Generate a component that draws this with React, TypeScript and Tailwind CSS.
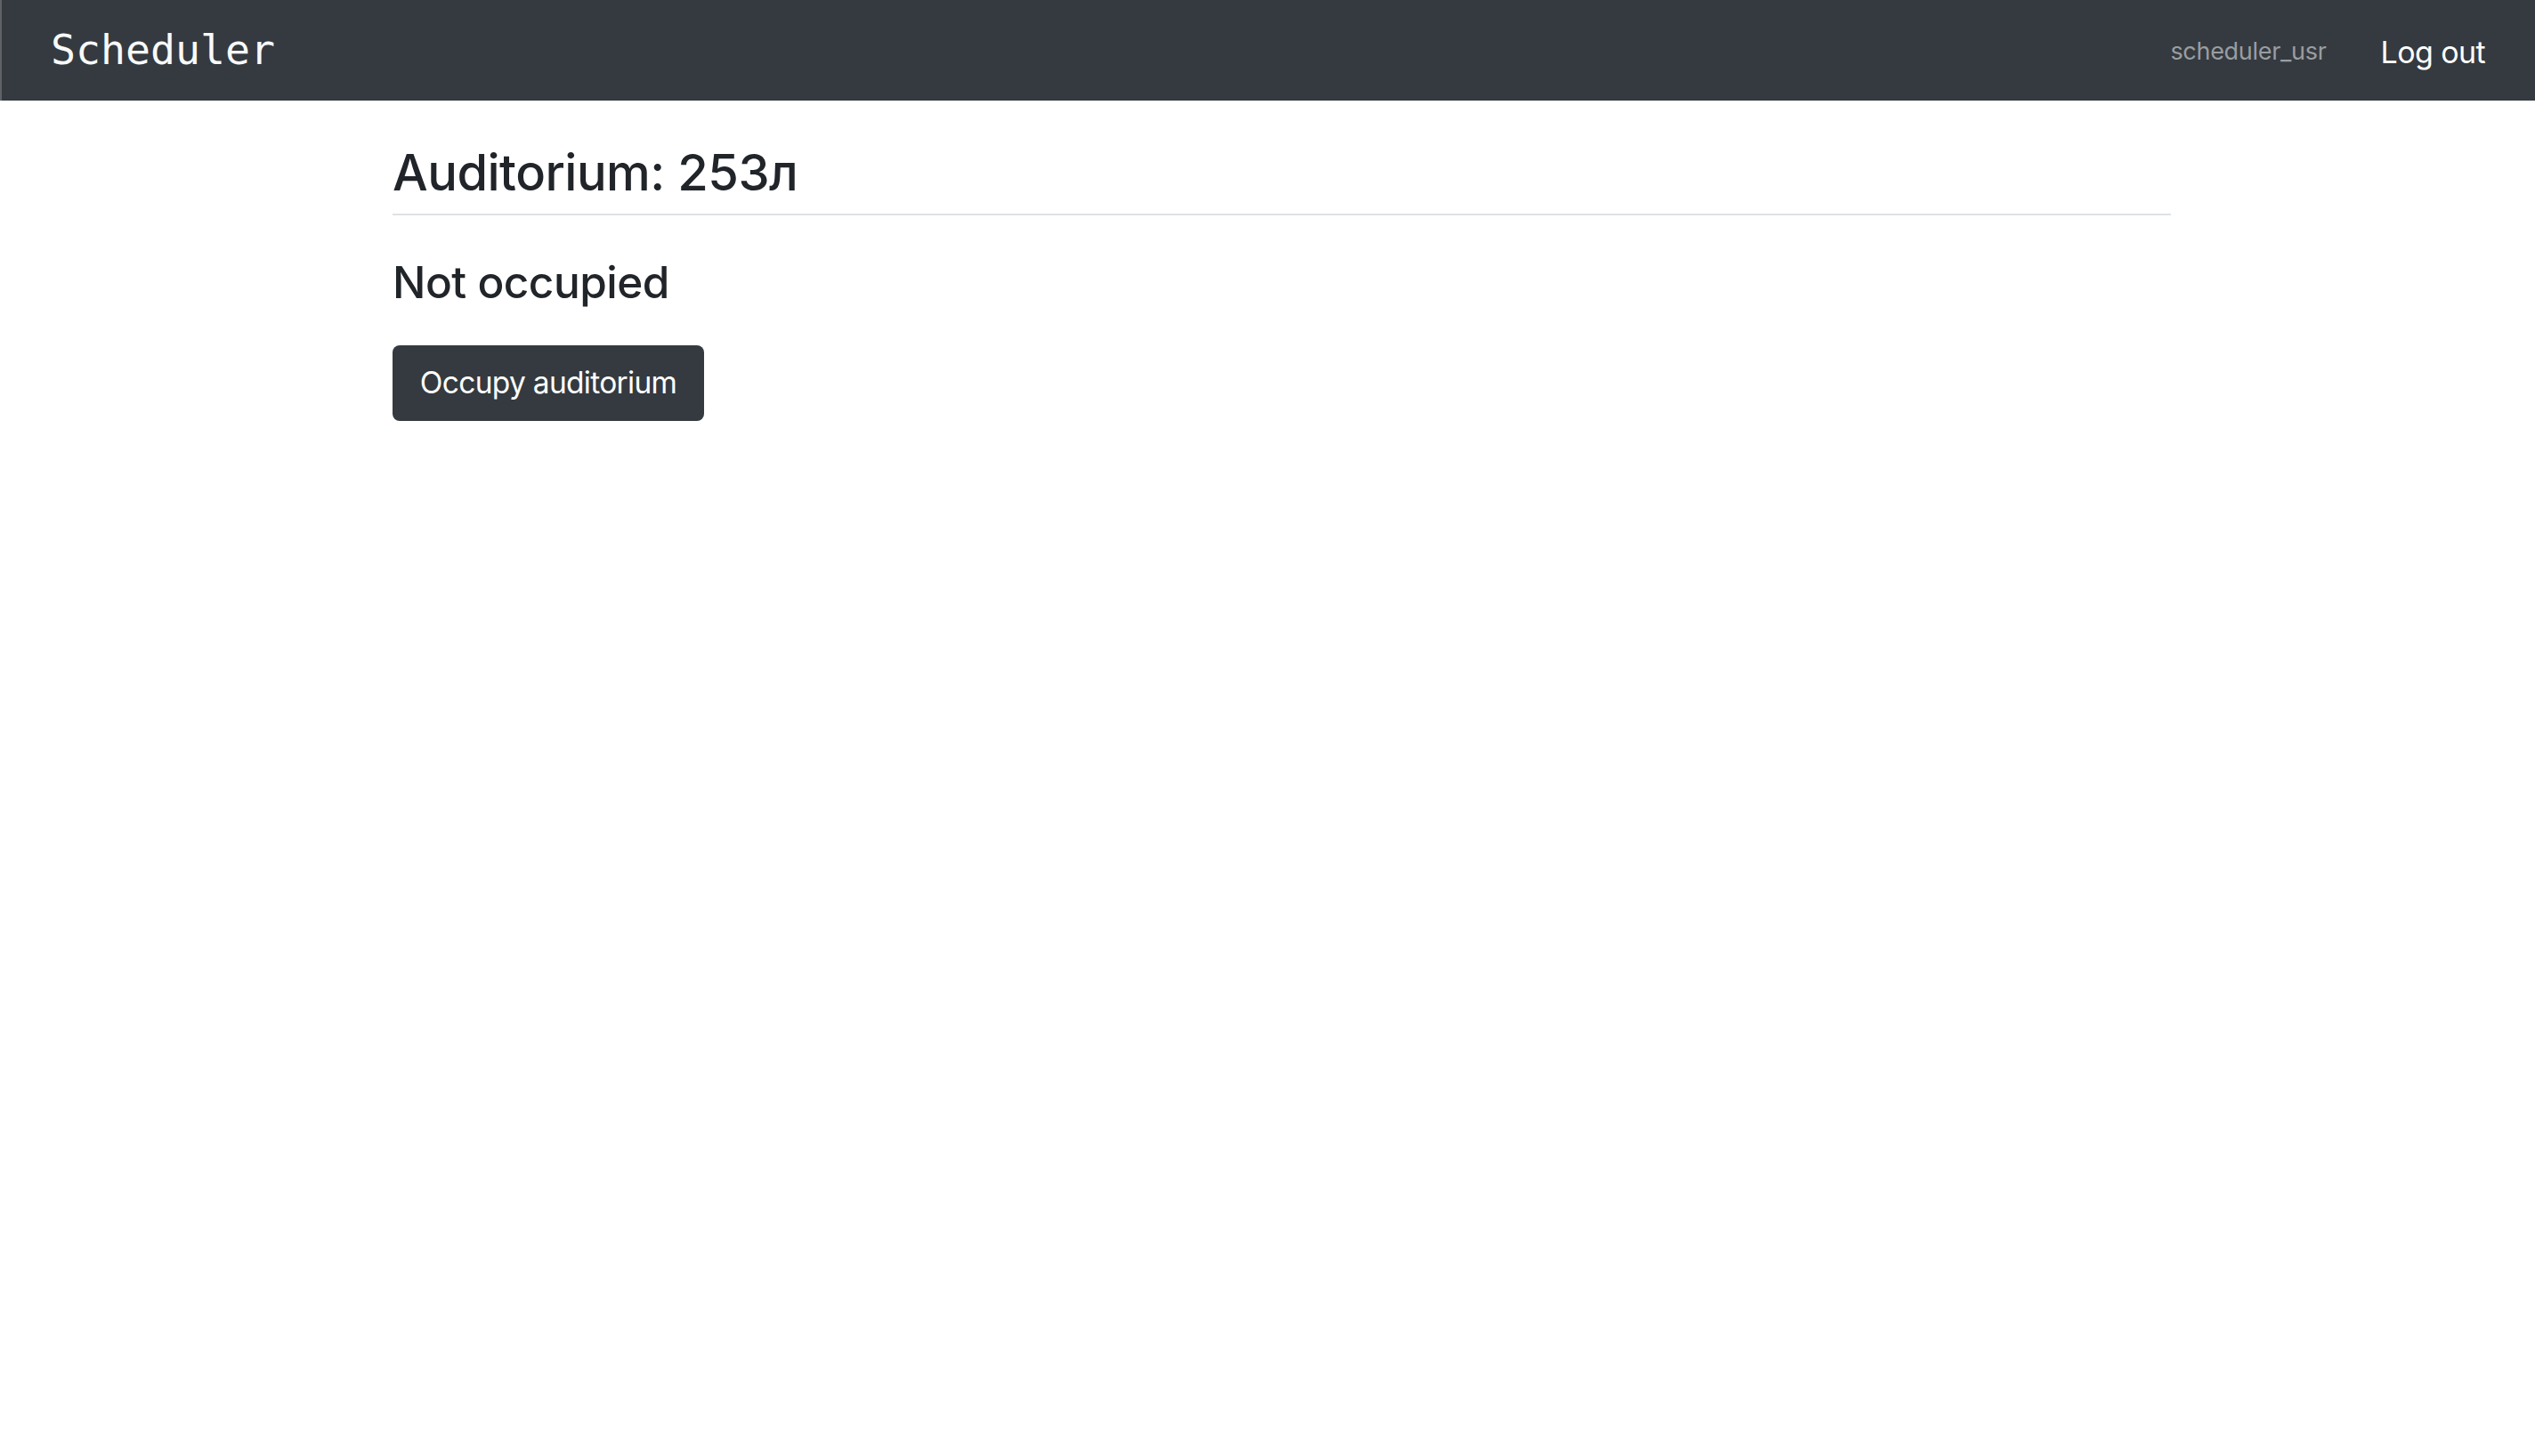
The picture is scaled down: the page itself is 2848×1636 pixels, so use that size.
export default function App() {
  const sans = { fontFamily: 'Inter, "Noto Sans", sans-serif' };
  return (
    <div className="min-h-[1636px] bg-white" style={sans}>
      <nav className="flex h-[113px] items-center justify-between border-l-2 border-[#5f6368] bg-[#343a40] pl-[55px] pr-[56px]">
        <span
          className="text-[46.5px] leading-none text-[#f8f9fa]"
          style={{ fontFamily: '"DejaVu Sans Mono", monospace' }}
        >
          Scheduler
        </span>
        <div className="flex items-center gap-[61px] pt-[3px]">
          <span className="text-[27px] tracking-[-0.3px] text-[#9a9da0]">scheduler_usr</span>
          <a className="text-[34px] tracking-[-0.6px] text-white">Log out</a>
        </div>
      </nav>
      <main className="ml-[441px] w-[1998px]">
        <h2 className="mt-[48px] border-b-2 border-[#dee2e6] pb-[12px] text-[56px] font-medium leading-[1.2] tracking-[-0.5px] text-[#212529]">
          Auditorium: 253л
        </h2>
        <h3 className="mt-[46px] text-[49.5px] font-medium leading-[1.2] tracking-[-0.5px] text-[#212529]">
          Not occupied
        </h3>
        <button className="mt-[40px] flex h-[85px] w-[350px] items-center justify-center rounded-[8px] bg-[#343a40] text-[33.5px] tracking-[-0.7px] text-white">
          Occupy auditorium
        </button>
      </main>
    </div>
  );
}
